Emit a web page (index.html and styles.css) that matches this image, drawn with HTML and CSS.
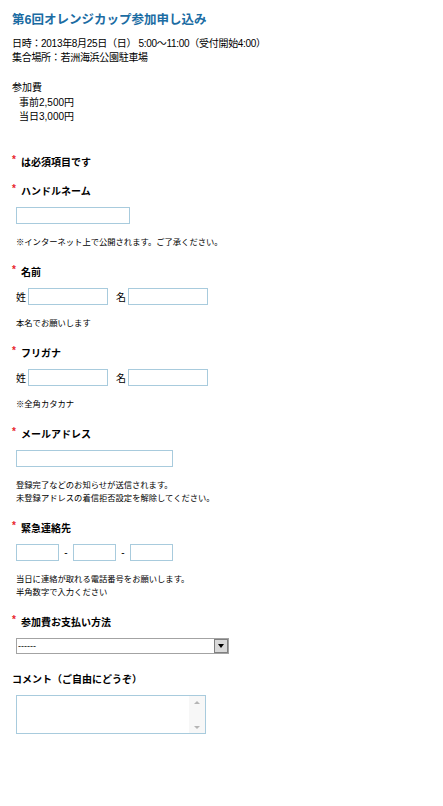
FILE: index.html
```html
<!DOCTYPE html>
<html lang="ja">
<head>
  <meta charset="UTF-8">
  <meta name="viewport" content="width=device-width, initial-scale=1.0">
  <title>第6回オレンジカップ参加申し込み</title>
  <link rel="stylesheet" href="styles.css">
</head>
<body>
  <div class="page">
    <h1 class="title">第6回オレンジカップ参加申し込み</h1>

    <div class="info">
      <p>日時：2013年8月25日（日） 5:00～11:00（受付開始4:00）</p>
      <p>集合場所：若洲海浜公園駐車場</p>
    </div>

    <div class="fee">
      <p>参加費</p>
      <p class="fee-item">事前2,500円</p>
      <p class="fee-item">当日3,000円</p>
    </div>

    <form class="entry-form">
      <p class="required-note"><span class="req">*</span>は必須項目です</p>

      <div class="field">
        <label class="field-label"><span class="req">*</span>ハンドルネーム</label>
        <div class="field-body">
          <input type="text" class="text-input handle">
          <p class="hint">※インターネット上で公開されます。ご了承ください。</p>
        </div>
      </div>

      <div class="field">
        <label class="field-label"><span class="req">*</span>名前</label>
        <div class="field-body">
          <div class="name-row">
            <span class="name-part">姓</span>
            <input type="text" class="text-input name">
            <span class="name-part second">名</span>
            <input type="text" class="text-input name">
          </div>
          <p class="hint">本名でお願いします</p>
        </div>
      </div>

      <div class="field">
        <label class="field-label"><span class="req">*</span>フリガナ</label>
        <div class="field-body">
          <div class="name-row">
            <span class="name-part">姓</span>
            <input type="text" class="text-input name">
            <span class="name-part second">名</span>
            <input type="text" class="text-input name">
          </div>
          <p class="hint">※全角カタカナ</p>
        </div>
      </div>

      <div class="field">
        <label class="field-label"><span class="req">*</span>メールアドレス</label>
        <div class="field-body">
          <input type="text" class="text-input email">
          <p class="hint">登録完了などのお知らせが送信されます。<br>未登録アドレスの着信拒否設定を解除してください。</p>
        </div>
      </div>

      <div class="field">
        <label class="field-label"><span class="req">*</span>緊急連絡先</label>
        <div class="field-body">
          <div class="phone-row">
            <input type="text" class="text-input phone">
            <span class="dash">-</span>
            <input type="text" class="text-input phone">
            <span class="dash">-</span>
            <input type="text" class="text-input phone">
          </div>
          <p class="hint">当日に連絡が取れる電話番号をお願いします。<br>半角数字で入力ください</p>
        </div>
      </div>

      <div class="field">
        <label class="field-label"><span class="req">*</span>参加費お支払い方法</label>
        <div class="field-body">
          <div class="select-box">
            <select class="select">
              <option>------</option>
            </select>
            <span class="select-arrow"></span>
          </div>
        </div>
      </div>

      <div class="field comment">
        <label class="field-label">コメント（ご自由にどうぞ）</label>
        <div class="field-body">
          <div class="textarea-box">
            <textarea class="textarea"></textarea>
            <div class="scrollbar">
              <span class="scroll-up"></span>
              <span class="scroll-down"></span>
            </div>
          </div>
        </div>
      </div>
    </form>
  </div>
</body>
</html>
```

FILE: styles.css
```css
body {
  margin: 0;
  padding: 0;
  background: #fff;
  color: #000;
  font-family: "Liberation Sans", "Noto Sans CJK JP", sans-serif;
  font-size: 10px;
}

p {
  margin: 0;
}

.page {
  padding: 11px 12px 40px;
}

.title {
  margin: 0;
  font-size: 12.5px;
  line-height: 18px;
  font-weight: bold;
  color: #1b6ca3;
}

.info {
  margin-top: 8px;
  line-height: 14px;
  letter-spacing: -0.3px;
}

.fee {
  margin-top: 16px;
  line-height: 14.5px;
}

.fee-item {
  padding-left: 7px;
}

.entry-form {
  margin-top: 30px;
}

.required-note,
.field-label {
  display: block;
  font-weight: bold;
  line-height: 16px;
}

.req {
  display: inline-block;
  width: 9px;
  color: #e8242b;
  font-size: 10px;
  line-height: 10px;
  vertical-align: top;
}

.field {
  margin-top: 16px;
}

.field:first-of-type {
  margin-top: 13px;
}

.field-body {
  padding-left: 4px;
}

.text-input {
  display: block;
  box-sizing: border-box;
  height: 17px;
  margin: 7px 0 0;
  padding: 0 2px;
  border: 1px solid #a8cbdd;
  font-size: 10px;
  background: #fff;
}

.handle {
  width: 114px;
}

.email {
  width: 157px;
}

.name-row,
.phone-row {
  display: flex;
  align-items: center;
  margin-top: 7px;
}

.name-row .text-input,
.phone-row .text-input {
  margin: 0;
}

.name-part {
  width: 12px;
}

.name-part.second {
  width: 12px;
  margin-left: 8px;
}

.name {
  width: 80px;
}

.phone {
  width: 43px;
}

.dash {
  width: 14px;
  text-align: center;
}

.hint {
  margin-top: 12px;
  font-size: 8.3px;
  line-height: 13px;
}

.select-box {
  display: flex;
  align-items: center;
  box-sizing: border-box;
  width: 213px;
  height: 16px;
  margin-top: 7px;
  border: 1px solid #a3a3a3;
}

.select {
  flex: 1;
  height: 14px;
  padding: 0 1px;
  border: none;
  outline: none;
  background: transparent;
  font-family: inherit;
  font-size: 9px;
  appearance: none;
  -webkit-appearance: none;
}

.select-arrow {
  position: relative;
  box-sizing: border-box;
  width: 14px;
  height: 14px;
  border: 1px solid #808080;
  background: #d9d9d9;
}

.select-arrow::after {
  content: "";
  position: absolute;
  left: 3px;
  top: 4px;
  border-left: 3.5px solid transparent;
  border-right: 3.5px solid transparent;
  border-top: 4px solid #000;
}

.comment {
  margin-top: 18px;
}

.textarea-box {
  display: flex;
  box-sizing: border-box;
  width: 190px;
  height: 39px;
  margin-top: 7px;
  border: 1px solid #a8cbdd;
}

.textarea {
  flex: 1;
  border: none;
  outline: none;
  resize: none;
  padding: 2px;
}

.scrollbar {
  display: flex;
  flex-direction: column;
  justify-content: space-between;
  align-items: center;
  width: 16px;
  padding: 5px 0 4px;
  box-sizing: border-box;
  background: #f7f7f7;
}

.scroll-up,
.scroll-down {
  width: 0;
  height: 0;
  border-left: 3px solid transparent;
  border-right: 3px solid transparent;
}

.scroll-up {
  border-bottom: 3px solid #b5b5b5;
}

.scroll-down {
  border-top: 3px solid #b5b5b5;
}
```
